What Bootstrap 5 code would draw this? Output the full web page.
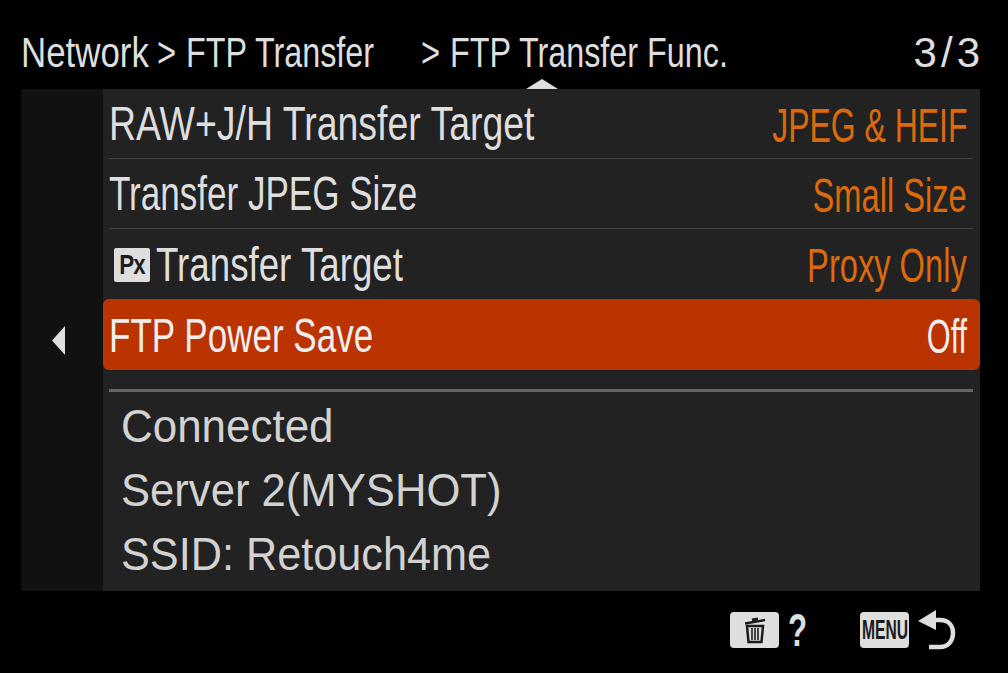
<!DOCTYPE html>
<html lang="en">
<head>
  <meta charset="UTF-8" />
  <title>FTP Transfer Func.</title>
  <link href="https://cdn.jsdelivr.net/npm/bootstrap@5.3.0/dist/css/bootstrap.min.css" rel="stylesheet" />
  <style>
    html, body { height: 100%; }
    body {
      background: #000;
      color: #dedede;
      font-family: "Liberation Sans", Arial, sans-serif;
      overflow: hidden;
    }
    .screen { width: 1008px; height: 673px; padding: 0 28px 0 21px; }
    .crumbs { height: 89px; font-size: 42px; line-height: 1; padding-top: 32px; position: relative; }
    .squeeze { display: inline-block; white-space: nowrap; transform-origin: left center; }
    .squeeze-r { display: inline-block; white-space: nowrap; transform-origin: right center; }
    .sx-65 { transform: scaleX(.64); }
    .sx-67 { transform: scaleX(.665); }
    .sx-68 { transform: scaleX(.68); }
    .sx-73 { transform: scaleX(.73); }
    .sx-76 { transform: scaleX(.765); }
    .sx-77 { transform: scaleX(.77); }
    .sx-78 { transform: scaleX(.78); }
    .sx-83 { transform: scaleX(.83); }
    .sx-92 { transform: scaleX(.92); }
    .sx-925 { transform: scaleX(.928); }
    .sx-93 { transform: scaleX(.935); }
    .page-num { letter-spacing: 4px; margin-right: -4px; }
    .crumb-a { width: 136px; }
    .crumb-b { width: 29px; }
    .crumb-c { width: 235px; }
    .crumb-d { width: 29px; }
    .up-tip {
      position: absolute; left: 505px; top: 79px; width: 0; height: 0;
      border-left: 16px solid transparent; border-right: 16px solid transparent;
      border-bottom: 10px solid #dedede;
    }
    .panel { height: 502px; background: #222; }
    .rail { width: 82px; background: #111; }
    .rail-arrow { margin-top: 237px; margin-left: 30px; width: 15px; height: 29px; }
    .rows { flex: 1; min-width: 0; }
    .menu-row {
      height: 70px; margin-left: 6px; margin-right: 7px; padding-right: 6px;
      font-size: 48px; line-height: 1;
      border-bottom: 1px solid #444;
    }
    .menu-row.last { border-bottom: 0; }
    .menu-row.on {
      height: 71px; margin: 0; padding: 0 13px 0 6px;
      background: #bb3300; border: 0; border-radius: 6px; color: #eee;
    }
    .menu-row.low { padding-top: 2px; }
    .val { color: #dc6a0c; padding-top: 4px; }
    .low .val { padding-top: 2px; }
    .on .val { color: #eee; }
    .px-tag {
      width: 36px; height: 34px; background: #dedede; color: #1c1c1c; flex: none;
      margin: 0 6px 0 5px; border-radius: 2px;
      font-size: 28px; font-weight: 700; line-height: 34px; text-align: center; overflow: hidden;
    }
    .px-tag span { display: inline-block; transform: scaleX(.8); letter-spacing: -1px; }
    .rule { height: 3px; background: #666; margin: 19px 7px 0 6px; }
    .status { padding: 2px 0 0 18px; font-size: 47px; line-height: 64px; color: #d2d2d2; }
    .foot { height: 82px; padding: 21px 24px 0 0; }
    .key {
      height: 36px; background: #dedede; color: #1c1c1c; border-radius: 4px;
    }
    .key-trash { width: 49px; }
    .key-menu { width: 49px; font-size: 28px; font-weight: 700; line-height: 36px; overflow: hidden; }
    .key-menu span { display: inline-block; transform: scaleX(.56); transform-origin: left center; margin-left: 2px; }
    .qmark { font-size: 46px; font-weight: 700; line-height: 36px; margin: 0 53px 0 9px; width: 19px; color: #dedede; }
    .qmark span { display: inline-block; transform: scaleX(.68); transform-origin: left center; }
    .back-arrow { margin: -2px 0 0 9px; }
  </style>
</head>
<body>
<div class="screen">
  <div class="crumbs d-flex">
    <div class="crumb-a"><span class="squeeze sx-83">Network</span></div>
    <div class="crumb-b"><span class="squeeze sx-78">&gt;</span></div>
    <div class="crumb-c"><span class="squeeze sx-77">FTP Transfer</span></div>
    <div class="crumb-d"><span class="squeeze sx-78">&gt;</span></div>
    <div class="flex-grow-1"><span class="squeeze sx-77">FTP Transfer Func.</span></div>
    <div><span class="page-num d-inline-block">3/3</span></div>
    <div class="up-tip"></div>
  </div>

  <div class="panel d-flex">
    <div class="rail">
      <svg class="rail-arrow d-block" viewBox="0 0 15 29"><polygon points="14,0 14,29 1,14.5" fill="#dedede"/></svg>
    </div>
    <div class="rows">
      <div class="menu-row d-flex justify-content-between align-items-center">
        <span class="squeeze sx-78">RAW+J/H Transfer Target</span>
        <span class="squeeze-r val sx-67">JPEG &amp; HEIF</span>
      </div>
      <div class="menu-row d-flex justify-content-between align-items-center">
        <span class="squeeze sx-73">Transfer JPEG Size</span>
        <span class="squeeze-r val sx-68">Small Size</span>
      </div>
      <div class="menu-row last low d-flex align-items-center">
        <div class="px-tag"><span>Px</span></div>
        <span class="squeeze sx-76">Transfer Target</span>
        <span class="squeeze-r val sx-68 ms-auto">Proxy Only</span>
      </div>
      <div class="menu-row on low d-flex justify-content-between align-items-center">
        <span class="squeeze sx-73">FTP Power Save</span>
        <span class="squeeze-r val sx-65">Off</span>
      </div>
      <div class="rule"></div>
      <div class="status">
        <div><span class="squeeze sx-93">Connected</span></div>
        <div><span class="squeeze sx-925">Server 2(MYSHOT)</span></div>
        <div><span class="squeeze sx-92">SSID: Retouch4me</span></div>
      </div>
    </div>
  </div>

  <div class="foot d-flex justify-content-end">
    <div class="key key-trash d-flex align-items-center justify-content-center">
      <svg width="22" height="30" viewBox="0 0 22 30" fill="none" stroke="#1c1c1c">
        <path d="M1 8.5 L21 5" stroke-width="2.5"/>
        <path d="M8 5 L14 4" stroke-width="3"/>
        <path d="M3 11 H19 L17.5 27 H4.5 Z" stroke-width="2.5"/>
        <path d="M8 13 V25 M11 13 V25 M14 13 V25" stroke-width="1.6"/>
      </svg>
    </div>
    <div class="qmark"><span>?</span></div>
    <div class="key key-menu"><span>MENU</span></div>
    <svg class="back-arrow" width="38" height="40" viewBox="0 0 38 40" fill="none">
      <polygon points="0,11 18,0 18,20" fill="#dedede"/>
      <path d="M14 10 H22 C30 10 35 15 35 23 C35 31 30 37 22 37 H11" stroke="#dedede" stroke-width="4.5"/>
    </svg>
  </div>
</div>
<script src="https://cdn.jsdelivr.net/npm/bootstrap@5.3.0/dist/js/bootstrap.bundle.min.js"></script>
</body>
</html>
